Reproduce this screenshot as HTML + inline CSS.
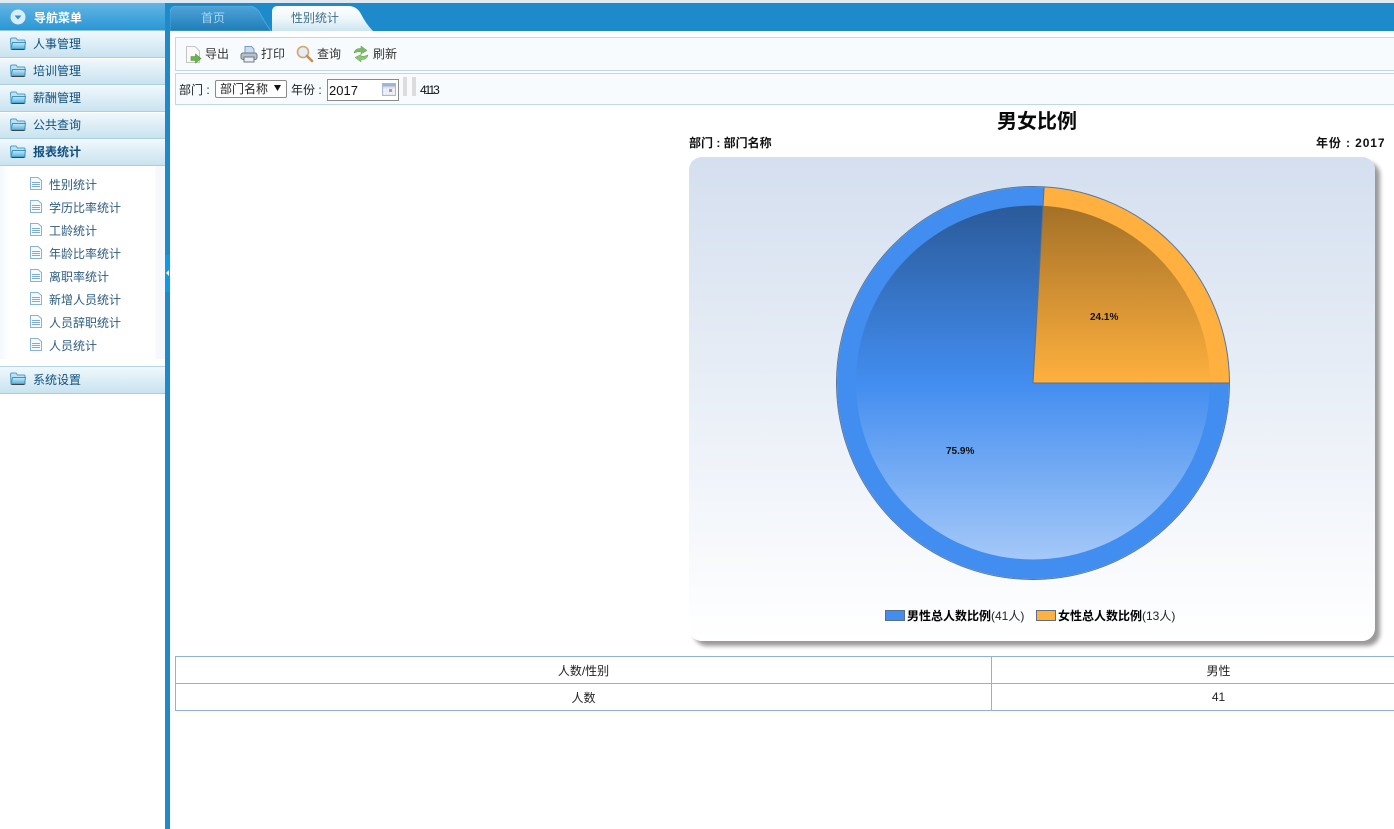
<!DOCTYPE html>
<html lang="zh"><head><meta charset="utf-8"><title>性别统计</title>
<style>
*{box-sizing:border-box}
html,body{margin:0;padding:0;width:1394px;height:829px;overflow:hidden;background:#fff;font-family:"Liberation Sans","Noto Sans CJK SC",sans-serif;font-size:12px;color:#000}
.a{position:absolute;white-space:nowrap}
#top{left:0;top:0;width:1394px;height:3px;background:#dfe9ef}
#nh{left:0;top:3px;width:165px;height:28px;background:linear-gradient(#63b5e3,#2a97d6);border-bottom:1px solid #8cc5e2}
#nh b{position:absolute;left:34px;top:8px;color:#fff;font-size:12px;line-height:15px}
#nh svg{position:absolute;left:10px;top:6px}
.nav{left:0;width:165px;height:27px;background:linear-gradient(#f0f8fc,#c9e3f0);border-top:1px solid #fff;border-bottom:1px solid #a9d0e2;color:#10507e;font-size:12px;line-height:24px;padding-left:33px}
.nav svg{position:absolute;left:10px;top:5px}
.sub{left:49px;color:#2e5c80;font-size:12px;line-height:16px}
.doc{left:30px}
#bar{left:165px;top:3px;width:5px;height:826px;background:#1c8acb}
#hd{left:170px;top:3px;width:1224px;height:28px;background:#1c8acb}
.tb{left:175px;width:1219px;background:#f7fbfd;border:1px solid #bcd9e4;border-right:0}
td{border:1px solid #8fb1e2;text-align:center;font-size:12px;color:#222;padding:0}
table{border-collapse:collapse;table-layout:fixed}
</style></head><body>
<div class="a" id="top"></div>
<div class="a" id="nh"><svg width="16" height="16"><circle cx="8" cy="8" r="7.5" fill="#d7edf9"/><path d="M4.5 6.5h7L8 10.5z" fill="#2e8fcb"/></svg><b>导航菜单</b></div>

<svg width="0" height="0" style="position:absolute"><defs>
<linearGradient id="fg" x1="0" y1="0" x2="0" y2="1"><stop offset="0" stop-color="#c9e8f6"/><stop offset="1" stop-color="#4fb2e2"/></linearGradient>
<symbol id="f" viewBox="0 0 16 14"><path d="M0.500 2.500Q0.500 1 2 1H6L7.500 3H14Q15 3 15 4V12H1Z" fill="#bfe0f0" stroke="#4d9fc6"/><path d="M1 12L2.500 5.500H15.500L14.500 12Z" fill="url(#fg)" stroke="#3d93bd"/><path d="M1.500 12.500H14.500" stroke="#444" stroke-width="1"/></symbol>
<symbol id="d" viewBox="0 0 12 13"><path d="M.5.5H8L11.500 3.500V12.500H.5Z" fill="#f6fafd" stroke="#86b3d6"/><path d="M2 5.500H10M2 7.500H10M2 9.500H10" stroke="#7fadd1"/></symbol>
</defs></svg>

<div class="a nav" style="top:31px"><svg width="16" height="14"><use href="#f"/></svg>人事管理</div>
<div class="a nav" style="top:58px"><svg width="16" height="14"><use href="#f"/></svg>培训管理</div>
<div class="a nav" style="top:85px"><svg width="16" height="14"><use href="#f"/></svg>薪酬管理</div>
<div class="a nav" style="top:112px"><svg width="16" height="14"><use href="#f"/></svg>公共查询</div>
<div class="a nav" style="top:139px;font-weight:bold"><svg width="16" height="14"><use href="#f"/></svg>报表统计</div>
<div class="a" style="left:0;top:166px;width:165px;height:193px;background:linear-gradient(90deg,#f3f9fc,#fff 10px,#fff 155px,#f6f8fb 156px)"></div>
<svg class="a doc" style="top:177px" width="12" height="13"><use href="#d"/></svg><div class="a sub" style="top:177px">性别统计</div>
<svg class="a doc" style="top:200px" width="12" height="13"><use href="#d"/></svg><div class="a sub" style="top:200px">学历比率统计</div>
<svg class="a doc" style="top:223px" width="12" height="13"><use href="#d"/></svg><div class="a sub" style="top:223px">工龄统计</div>
<svg class="a doc" style="top:246px" width="12" height="13"><use href="#d"/></svg><div class="a sub" style="top:246px">年龄比率统计</div>
<svg class="a doc" style="top:269px" width="12" height="13"><use href="#d"/></svg><div class="a sub" style="top:269px">离职率统计</div>
<svg class="a doc" style="top:292px" width="12" height="13"><use href="#d"/></svg><div class="a sub" style="top:292px">新增人员统计</div>
<svg class="a doc" style="top:315px" width="12" height="13"><use href="#d"/></svg><div class="a sub" style="top:315px">人员辞职统计</div>
<svg class="a doc" style="top:338px" width="12" height="13"><use href="#d"/></svg><div class="a sub" style="top:338px">人员统计</div>
<div class="a nav" style="top:366px;height:28px;border-top-color:#b5d8e8;line-height:26px"><svg width="16" height="14"><use href="#f"/></svg>系统设置</div>

<div class="a" id="bar"></div>
<div class="a" style="left:165px;top:255px;width:5px;height:37px;background:#0d9be8"></div>
<svg class="a" style="left:165px;top:269px" width="5" height="8"><path d="M1 4L4 1V7Z" fill="#fff"/></svg>
<div class="a" id="hd"></div>

<svg class="a" style="left:170px;top:6px" width="205" height="25">
<defs>
<linearGradient id="t1" x1="0" y1="0" x2="0" y2="1"><stop offset="0" stop-color="#4fa3d8"/><stop offset="1" stop-color="#1f7db9"/></linearGradient>
<linearGradient id="t2" x1="0" y1="0" x2="0" y2="1"><stop offset="0" stop-color="#fff"/><stop offset=".5" stop-color="#eef7fb"/><stop offset="1" stop-color="#cde5f0"/></linearGradient>
</defs>
<path d="M0 25V7Q0 0 7 0H78Q86 0 90 7Q95 17 101 25Z" fill="url(#t1)" stroke="#5fb0dd" stroke-width=".7"/>
<path d="M102 25V6Q102 0 108 0H178Q187 0 191 8Q196 18 203 25Z" fill="url(#t2)"/>
</svg>
<div class="a" style="left:201px;top:10px;color:#a9d6f0;font-size:12px;line-height:16px">首页</div>
<div class="a" style="left:291px;top:10px;color:#3f6f8c;font-size:12px;line-height:16px">性别统计</div>

<div class="a tb" style="top:37px;height:34px"></div>
<svg class="a" style="left:185px;top:46px" width="18" height="18"><path d="M1.500.5H10L14.500 5V16.500H1.500Z" fill="#fafafa" stroke="#c4c4c4"/><path d="M6 10.500H10.500V8L16 12.500L10.500 17V14.500H6Z" fill="#6cb34d" stroke="#4f9a38" stroke-width=".6"/></svg>
<div class="a" style="left:205px;top:46px;color:#333;line-height:16px">导出</div>
<svg class="a" style="left:240px;top:45px" width="18" height="18"><path d="M5 8V1.500H11.500L14 4V8Z" fill="#c9def3" stroke="#7a9cc5"/><rect x="1" y="8" width="16" height="6.500" rx="2" fill="#b9c0c8" stroke="#6d7784"/><rect x="4" y="12" width="10" height="5" fill="#e8eef4" stroke="#6d7784"/></svg>
<div class="a" style="left:261px;top:46px;color:#333;line-height:16px">打印</div>
<svg class="a" style="left:296px;top:45px" width="18" height="18"><circle cx="7" cy="7" r="5.500" fill="#e4eef7" stroke="#d4a56d" stroke-width="1.600"/><path d="M11 11L16 16" stroke="#c48d52" stroke-width="2.600" stroke-linecap="round"/></svg>
<div class="a" style="left:317px;top:46px;color:#333;line-height:16px">查询</div>
<svg class="a" style="left:352px;top:45px" width="18" height="18"><path d="M2 8Q3 3 9 3.500V1L15 5.500L9 9V6.500Q5 6.500 2 8Z" fill="#7cb865" stroke="#5e9c48" stroke-width=".5"/><path d="M16 10Q15 15 9 14.500V17L3 12.500L9 9.500V11.500Q13 11.500 16 10Z" fill="#8cc670" stroke="#5e9c48" stroke-width=".5"/></svg>
<div class="a" style="left:373px;top:46px;color:#333;line-height:16px">刷新</div>

<div class="a tb" style="top:73px;height:32px"></div>
<div class="a" style="left:179px;top:82px;line-height:16px;color:#222">部门 : </div>
<div class="a" style="left:215px;top:80px;width:72px;height:18px;background:#fff;border:1px solid #8a8a8a;border-radius:2px;line-height:17px;padding-left:4px;color:#222">部门名称</div>
<svg class="a" style="left:274px;top:85px" width="7" height="6"><path d="M0 0H7L3.500 6Z" fill="#111"/></svg>
<div class="a" style="left:291px;top:82px;line-height:16px;color:#222">年份 : </div>
<div class="a" style="left:327px;top:79px;width:72px;height:22px;background:#fff;border:1px solid #8a8a8a;font-size:13px;line-height:21px;padding-left:1px;color:#111">2017</div>
<svg class="a" style="left:382px;top:83px" width="14" height="13"><rect x=".5" y=".5" width="13" height="12" fill="#d8e2f0" stroke="#a7bbd6"/><rect x=".5" y=".5" width="13" height="3" fill="#9fb4d4"/><path d="M3 5V12M6 5V12M9 5V12M12 5V12M1 7H13M1 10H13" stroke="#fff" stroke-width=".7"/><rect x="7" y="6" width="3" height="3" fill="#d98a7a"/></svg>
<div class="a" style="left:403px;top:77px;width:4px;height:19px;background:#dcdcdc"></div>
<div class="a" style="left:412px;top:77px;width:4px;height:19px;background:#dcdcdc"></div>
<div class="a" style="left:420px;top:82px;line-height:16px;color:#111;letter-spacing:-2px">4113</div>

<div class="a" style="left:997px;top:108px;font-size:20px;font-weight:bold;line-height:28px;color:#0a0a0a">男女比例</div>
<div class="a" style="left:689px;top:136px;font-weight:bold;line-height:15px;color:#111">部门 : 部门名称</div>
<div class="a" style="left:1316px;top:136px;font-weight:bold;line-height:15px;color:#111;font-size:12px;letter-spacing:.9px">年份 : 2017</div>

<div class="a" style="left:689px;top:157px;width:686px;height:484px;border-radius:13px;background:linear-gradient(#d4dfef,#fff 100%);box-shadow:5px 5px 4px #9a9a9a"></div>
<svg class="a" style="left:689px;top:157px" width="686" height="484" font-family="Liberation Sans,sans-serif">
<defs><linearGradient id="ov" gradientUnits="userSpaceOnUse" x1="0" y1="49" x2="0" y2="402"><stop offset="0" stop-color="#000" stop-opacity=".36"/><stop offset=".5" stop-color="#000" stop-opacity="0"/><stop offset=".5" stop-color="#fff" stop-opacity="0"/><stop offset="1" stop-color="#fff" stop-opacity=".52"/></linearGradient></defs>
<circle cx="344" cy="226" r="196" fill="#428df0"/>
<path d="M344 226H540.500A196.500 196.500 0 0 0 355.100 29.800Z" fill="#ffb03e"/>
<circle cx="344" cy="225.500" r="177" fill="url(#ov)"/>
<circle cx="344" cy="226" r="196.500" fill="none" stroke="#56769e" stroke-width="1"/>
<path d="M344 226H540.500M344 226L355.100 29.800" stroke="#5d6f85" stroke-width="1" fill="none"/>
<text x="401" y="163" font-size="10" font-weight="bold" fill="#111">24.1%</text>
<text x="257" y="297" font-size="10" font-weight="bold" fill="#111">75.9%</text>
<rect x="196.500" y="453.500" width="19" height="10" fill="#428df0" stroke="#5d6f85"/>
<rect x="347.500" y="453.500" width="19" height="10" fill="#ffb03e" stroke="#5d6f85"/>
</svg>
<div class="a" style="left:907px;top:608px;line-height:16px;font-size:12px;font-weight:bold;color:#000">男性总人数比例<span style="font-weight:normal;font-size:12px;color:#222">(41人)</span></div>
<div class="a" style="left:1058px;top:608px;line-height:16px;font-size:12px;font-weight:bold;color:#000">女性总人数比例<span style="font-weight:normal;font-size:12px;color:#222">(13人)</span></div>

<table class="a" style="left:175px;top:656px;width:1300px;height:55px">
<colgroup><col style="width:816px"><col style="width:484px"></colgroup>
<tr style="height:27px"><td>人数/性别</td><td><span style="position:relative;left:-15px">男性</span></td></tr>
<tr style="height:27px"><td>人数</td><td><span style="position:relative;left:-15px">41</span></td></tr>
</table>
</body></html>
